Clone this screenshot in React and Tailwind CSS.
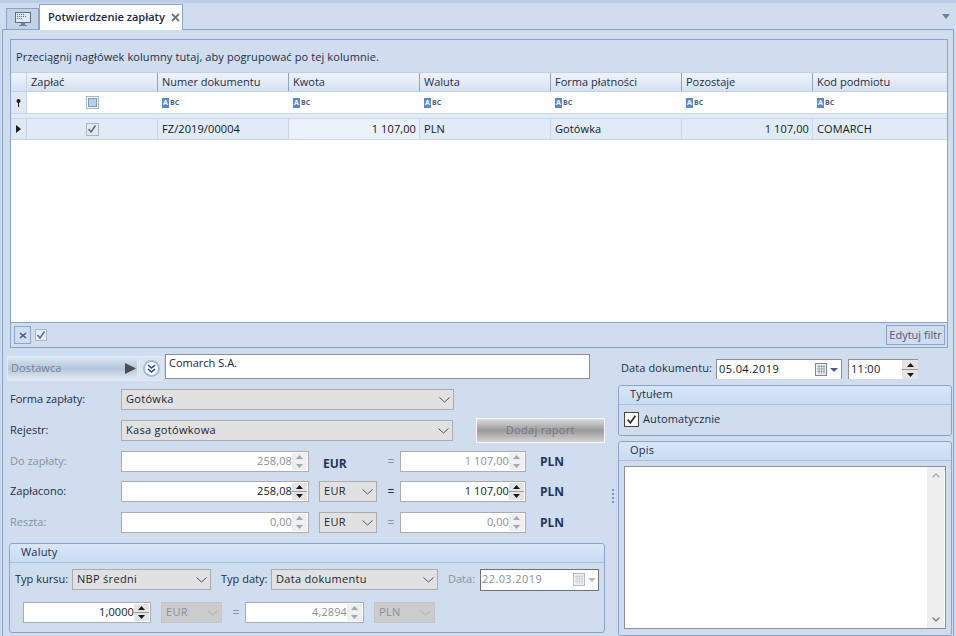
const font = { fontFamily: '"Open Sans", sans-serif' }

const KOLUMNY = [
  { nazwa: 'Numer dokumentu', w: 'w-[131px]' },
  { nazwa: 'Kwota', w: 'w-[131px]' },
  { nazwa: 'Waluta', w: 'w-[131px]' },
  { nazwa: 'Forma płatności', w: 'w-[131px]' },
  { nazwa: 'Pozostaje', w: 'w-[131px]' },
  { nazwa: 'Kod podmiotu', w: 'flex-1' },
]

function Abc() {
  return (
    <span className="flex items-center gap-[1px] ml-[4px]">
      <span className="w-[7px] h-[10px] bg-[#5b87cf] text-white text-[7px] leading-[10px] font-bold text-center">A</span>
      <span className="text-[#4a5f86] text-[7px] leading-[10px] font-bold">BC</span>
    </span>
  )
}

function Check({ color = '#5a6f90', size = 10 }) {
  return (
    <svg width={size} height={size} viewBox="0 0 10 10">
      <path d="M1.5 5 L4 8 L8.5 1.5" fill="none" stroke={color} strokeWidth="1.6" />
    </svg>
  )
}

function Spin({ disabled, w = 'w-[16px]' }) {
  const c = disabled ? '#a0a8b0' : '#1a1a1a'
  return (
    <div className={`${w} h-full flex flex-col shrink-0 gap-[1px] ${disabled ? 'bg-[#f6f6f6]' : 'bg-[#9a9a9a]'}`}>
      <div className={`flex-1 flex items-center justify-center ${disabled ? 'bg-[#eeeeee]' : 'bg-[#e4e4e4]'}`}>
        <svg width="7" height="4" viewBox="0 0 7 4"><path d="M3.5 0 L7 4 H0 Z" fill={c} /></svg>
      </div>
      <div className={`flex-1 flex items-center justify-center ${disabled ? 'bg-[#eeeeee]' : 'bg-[#e4e4e4]'}`}>
        <svg width="7" height="4" viewBox="0 0 7 4"><path d="M0 0 H7 L3.5 4 Z" fill={c} /></svg>
      </div>
    </div>
  )
}

function NumInput({ value, w, faded }) {
  return (
    <div className={`${w} h-[21px] flex border border-[#a9adb2] bg-white pr-[1px] py-[1px]`}>
      <span className={`flex-1 text-right text-[11px] tracking-[0.1px] leading-[15px] whitespace-nowrap ${faded ? 'text-[#8a8f98]' : 'text-[#101828]'}`}>{value}</span>
      <Spin disabled={faded} w="w-[15px]" />
    </div>
  )
}

function Chevron({ color = '#4a5568' }) {
  return (
    <svg width="11" height="6" viewBox="0 0 11 6" className="shrink-0">
      <path d="M0.5 0.5 L5.5 5 L10.5 0.5" fill="none" stroke={color} strokeWidth="1" />
    </svg>
  )
}

function Select({ value, w, disabled }) {
  return (
    <div className={`${w} h-[21px] flex items-center justify-between pl-[4px] pr-[3px] border text-[11px] tracking-[0.3px] whitespace-nowrap ${disabled ? 'bg-[#cccccc] border-[#c4c4c4] text-[#8a8f98]' : 'bg-[#e1e1e1] border-[#a9adb2] text-[#1b2436]'}`}>
      <span>{value}</span>
      <Chevron color={disabled ? '#aab0b8' : '#4a5568'} />
    </div>
  )
}

function CalendarIcon({ faded }) {
  return (
    <span className="flex items-center gap-[2px] shrink-0">
      <svg width="13" height="14" viewBox="0 0 13 14">
        <rect x="0.5" y="0.5" width="11" height="12" fill="#eef0f3" stroke={faded ? '#b8bcc2' : '#7d8592'} />
        <path d="M2 3.5H10M2 6H10M2 8.5H10M4 2V11M6.5 2V11M9 2V11" stroke={faded ? '#c6cad0' : '#8a929e'} strokeWidth="0.7" />
      </svg>
      <svg width="8" height="4" viewBox="0 0 8 4"><path d="M0 0H8L4 4Z" fill={faded ? '#b8bcc2' : '#4c5f80'} /></svg>
    </span>
  )
}

function GroupHeader({ children }) {
  return (
    <div className="h-[19px] shrink-0 flex items-center pl-[11px] pb-[2px] text-[11px] tracking-[0.2px] text-[#1f2d48] bg-gradient-to-b from-[#d9e6f7] to-[#c8dcf4] border-b border-[#a9bfdc] rounded-t-[3px]">
      {children}
    </div>
  )
}

function Label({ children, faded }) {
  return <span className={`w-[114px] shrink-0 pl-[3px] text-[11px] whitespace-nowrap ${faded ? 'text-[#8a929e]' : 'text-[#1f2d48]'}`}>{children}</span>
}

function Kwoty({ label, kwota, pln, wal, faded }) {
  return (
    <div className="flex items-center h-[21px]">
      <Label faded={faded}>{label}</Label>
      <NumInput value={kwota} w="w-[188px]" faded={faded} />
      <div className="w-[58px] ml-[10px] shrink-0">
        {wal ? <Select value="EUR" w="w-[58px]" /> : <span className="pl-[4px] text-[12px] font-bold text-[#1f3560]">EUR</span>}
      </div>
      <span className={`w-[23px] pl-[5px] text-center text-[12px] ${faded ? 'text-[#8a929e]' : 'text-[#1f2d48]'}`}>=</span>
      <NumInput value={pln} w="w-[126px]" faded={faded} />
      <span className="ml-[14px] text-[12px] font-bold text-[#1f3560]">PLN</span>
    </div>
  )
}

export default function App() {
  return (
    <div style={font} className="w-[956px] h-[636px] overflow-hidden bg-[#d0ddee] flex flex-col">
      {/* Zakladki */}
      <div className="h-[30px] shrink-0 flex items-end border-t-[3px] border-[#bccde3] pl-[6px] pr-[6px] relative z-10">
        <div className="w-[33px] h-[21px] mb-[1px] border border-[#8aa3c8] border-b-0 bg-[#c3d2e7] flex items-center justify-center">
          <svg width="16" height="15" viewBox="0 0 16 15">
            <rect x="0.5" y="0.5" width="15" height="10" fill="#dfe9f6" stroke="#5a6d8c" />
            <path d="M2 2.5H9M2 4.5H11M2 6.5H8" stroke="#5a6d8c" strokeDasharray="1 1" />
            <path d="M6 11H10V13H12V14H4V13H6Z" fill="#6d7f9c" />
          </svg>
        </div>
        <div className="w-[144px] h-[26px] border border-[#8aa3c8] border-b-0 bg-white flex items-center pl-[8px] gap-[6px] whitespace-nowrap">
          <span className="text-[11px] font-semibold text-[#1c2a4a]">Potwierdzenie zapłaty</span>
          <svg width="9" height="9" viewBox="0 0 9 9"><path d="M1 1L8 8M8 1L1 8" stroke="#6d7686" strokeWidth="1.8" /></svg>
        </div>
        <div className="flex-1" />
        <svg width="8" height="5" viewBox="0 0 8 5" className="mb-[11px]"><path d="M0 0H8L4 5Z" fill="#6a7f9f" /></svg>
      </div>

      {/* Zawartosc */}
      <div className="flex-1 min-h-0 ml-[2px] mr-[2px] border-l border-t border-r border-[#8aa3c8] pl-[7px] pr-[5px] pt-[9px] flex flex-col -mt-[1px]">
        {/* Siatka */}
        <div className="h-[309px] shrink-0 border border-[#8aa3c8] flex flex-col bg-white text-[#1f2d48]">
          <div className="h-[32px] shrink-0 bg-[#d0ddee] flex items-center pl-[5px] text-[11px] tracking-[0.1px] pt-[3px]">
            Przeciągnij nagłówek kolumny tutaj, aby pogrupować po tej kolumnie.
          </div>
          <div className="h-[20px] shrink-0 flex bg-gradient-to-b from-[#eef3fa] to-[#d5e2f3] border-y border-[#c1d1e6] text-[11px] leading-[18px] whitespace-nowrap">
            <div className="w-[16px] shrink-0 border-r border-[#c4d3e8]" />
            <div className="w-[131px] shrink-0 border-r border-[#8aa3c8] pl-[4px]">Zapłać</div>
            {KOLUMNY.map(k => (
              <div key={k.nazwa} className={`${k.w} shrink-0 border-r last:border-r-0 border-[#8aa3c8] pl-[4px]`}>{k.nazwa}</div>
            ))}
          </div>
          <div className="h-[21px] shrink-0 flex">
            <div className="w-[16px] shrink-0 flex items-center justify-center border-r border-[#c4d3e8] bg-[#dfe8f4]">
              <svg width="5" height="8" viewBox="0 0 5 8"><circle cx="2.5" cy="2" r="2" fill="#1a1a1a" /><path d="M2 3H3V8H2Z" fill="#1a1a1a" /></svg>
            </div>
            <div className="w-[131px] shrink-0 flex items-center justify-center">
              <span className="w-[13px] h-[13px] border border-[#a4b7d2] p-[1px]"><span className="block w-full h-full bg-[#bcd0ea] border border-[#7f9ac2]" /></span>
            </div>
            {KOLUMNY.map(k => (
              <div key={k.nazwa} className={`${k.w} shrink-0 flex items-center`}><Abc /></div>
            ))}
          </div>
          <div className="h-[6px] shrink-0 bg-[#e2ecf7] border-y border-[#c7d7ec]" />
          <div className="h-[21px] shrink-0 flex bg-[#e1ebf6] border-b border-[#c7d7ec] text-[11px] tracking-[0.1px] leading-[20px] text-[#111827] whitespace-nowrap">
            <div className="w-[16px] shrink-0 flex items-center justify-center bg-[#dfe8f4] border-r border-[#c4d3e8]">
              <svg width="5" height="8" viewBox="0 0 5 8"><path d="M0 0L5 4L0 8Z" fill="#1a1a1a" /></svg>
            </div>
            <div className="w-[131px] shrink-0 flex items-center justify-center border-r border-[#c7d7ec]">
              <span className="w-[13px] h-[13px] border border-[#a4b7d2] bg-[#e8e8e8] flex items-center justify-center"><Check /></span>
            </div>
            <div className="w-[131px] shrink-0 border-r border-[#c7d7ec] pl-[4px]">FZ/2019/00004</div>
            <div className="w-[131px] shrink-0 border-r border-[#c7d7ec] text-right pr-[3px] bg-[#eaf1f9]">1 107,00</div>
            <div className="w-[131px] shrink-0 border-r border-[#c7d7ec] pl-[4px]">PLN</div>
            <div className="w-[131px] shrink-0 border-r border-[#c7d7ec] pl-[4px]">Gotówka</div>
            <div className="w-[131px] shrink-0 border-r border-[#c7d7ec] text-right pr-[3px]">1 107,00</div>
            <div className="flex-1 pl-[4px]">COMARCH</div>
          </div>
          <div className="flex-1" />
          <div className="h-[25px] shrink-0 bg-[#d0ddee] border-t border-[#8aa3c8] flex items-center pl-[3px] pr-[2px]">
            <div className="w-[17px] h-[18px] border border-[#8aa3c8] flex items-center justify-center">
              <svg width="8" height="7" viewBox="0 0 8 7"><path d="M1 1L7 6M7 1L1 6" stroke="#4a5a78" strokeWidth="1.6" /></svg>
            </div>
            <span className="ml-[4px] w-[12px] h-[12px] border border-[#a4b7d2] bg-[#e8edf4] flex items-center justify-center"><Check /></span>
            <div className="flex-1" />
            <div className="w-[59px] h-[20px] border border-[#8aa3c8] flex items-center justify-center text-[11px] text-[#4a5a78] whitespace-nowrap">Edytuj filtr</div>
          </div>
        </div>

        {/* Formularz */}
        <div className="flex-1 min-h-0 flex -ml-[3px] -mr-[4px]">
          <div className="w-[598px] shrink-0 flex flex-col">
            <div className="flex mt-[6px] h-[27px]">
              <div className="w-[131px] h-[25px] mt-[2px] flex items-center justify-between pl-[3px] pr-[1px] text-[11px] font-medium tracking-[0.1px] text-[#7a8290] border border-[#e3eaf3] bg-gradient-to-b from-[#dce6f2] via-[#b4c6da] to-[#e3ebf4]">
                <span className="pb-[1px]">Dostawca</span>
                <svg width="11" height="11" viewBox="0 0 11 11"><path d="M0 0L11 5.5L0 11Z" fill="#4d4d4d" /></svg>
              </div>
              <div className="w-[24px] h-[25px] mt-[2px] ml-[1px] flex items-center justify-center border border-[#e3eaf3] bg-[#d9e4f1]">
                <span className="w-[17px] h-[17px] rounded-full border-2 border-[#a9b8e0] bg-white flex items-center justify-center">
                  <svg width="9" height="9" viewBox="0 0 9 9"><path d="M1 1L4.5 4L8 1M1 5L4.5 8L8 5" fill="none" stroke="#1c3f94" strokeWidth="1.4" /></svg>
                </span>
              </div>
              <div className="w-[425px] h-[25px] ml-[2px] bg-white border border-[#8c8f94] pl-[3px] text-[11px] leading-[16px] text-[#1b2436]">Comarch S.A.</div>
            </div>

            <div className="flex items-center h-[21px] mt-[8px]">
              <Label>Forma zapłaty:</Label>
              <Select value="Gotówka" w="w-[333px]" />
            </div>
            <div className="flex items-center h-[21px] mt-[10px]">
              <Label>Rejestr:</Label>
              <Select value="Kasa gotówkowa" w="w-[333px]" />
              <div className="w-[130px] h-[25px] ml-[23px] flex items-center justify-center text-[11px] tracking-[0.3px] text-[#737a85] border border-[#f4f7fb] bg-gradient-to-b from-[#dcdcdc] via-[#9a9a9a] to-[#d4d4d4]">Dodaj raport</div>
            </div>
            <div className="mt-[10px]"><Kwoty label="Do zapłaty:" kwota="258,08" pln="1 107,00" faded /></div>
            <div className="mt-[9px]"><Kwoty label="Zapłacono:" kwota="258,08" pln="1 107,00" wal /></div>
            <div className="mt-[10px]"><Kwoty label="Reszta:" kwota="0,00" pln="0,00" faded wal /></div>

            <div className="mt-[10px] ml-[2px] w-[596px] h-[90px] border border-[#8aa3c8] rounded-[3px] flex flex-col">
              <GroupHeader>Waluty</GroupHeader>
              <div className="flex items-center h-[21px] mt-[6px] pl-[5px] text-[11px] text-[#1f2d48] whitespace-nowrap">
                <span className="w-[57px] shrink-0">Typ kursu:</span>
                <Select value="NBP średni" w="w-[139px]" />
                <span className="ml-[10px] w-[50px] shrink-0">Typ daty:</span>
                <Select value="Data dokumentu" w="w-[167px]" />
                <span className="ml-[10px] w-[32px] shrink-0 text-[#8a929e]">Data:</span>
                <div className="w-[119px] h-[22px] flex items-center justify-between pl-[1px] pr-[2px] bg-white border border-[#6f7379] text-[#8a8f98] tracking-[0.4px]">
                  <span>22.03.2019</span>
                  <CalendarIcon faded />
                </div>
              </div>
              <div className="flex items-center h-[21px] mt-[12px] pl-[13px]">
                <NumInput value="1,0000" w="w-[128px]" />
                <div className="ml-[10px]"><Select value="EUR" w="w-[61px]" disabled /></div>
                <span className="w-[23px] pl-[5px] text-center text-[12px] text-[#8a929e]">=</span>
                <NumInput value="4,2894" w="w-[119px]" faded />
                <div className="ml-[10px]"><Select value="PLN" w="w-[61px]" disabled /></div>
              </div>
            </div>
          </div>

          {/* Spliter */}
          <div className="w-[13px] shrink-0 flex flex-col items-center gap-[2px] pt-[141px] pl-[3px]">
            <span className="w-[2px] h-[2px] bg-[#7d93b5]" />
            <span className="w-[2px] h-[2px] bg-[#7d93b5]" />
            <span className="w-[2px] h-[2px] bg-[#7d93b5]" />
            <span className="w-[2px] h-[2px] bg-[#7d93b5]" />
          </div>

          <div className="w-[334px] shrink-0 flex flex-col">
            <div className="flex items-center h-[20px] mt-[11px] pl-[3px] text-[11px] text-[#1f2d48] whitespace-nowrap">
              <span className="w-[95px] shrink-0 tracking-[0.1px] pb-[1px]">Data dokumentu:</span>
              <div className="w-[126px] h-[20px] flex items-center justify-between pl-[2px] pr-[3px] bg-white border border-[#8c8f94] border-b-0 text-[#101828] tracking-[0.4px]">
                <span>05.04.2019</span>
                <CalendarIcon />
              </div>
              <div className="w-[70px] h-[20px] ml-[6px] flex bg-white border border-[#8c8f94] border-b-0 border-r-0 pl-[2px] text-[#101828]">
                <span className="flex-1 leading-[18px] tracking-[0.3px]">11:00</span>
                <Spin />
              </div>
            </div>
            <div className="mt-[6px] h-[51px] border border-[#8aa3c8] rounded-[3px] flex flex-col">
              <GroupHeader>Tytułem</GroupHeader>
              <div className="flex items-center gap-[4px] pl-[5px] mt-[6px] text-[11px] tracking-[0.1px] text-[#1f2d48]">
                <span className="w-[15px] h-[15px] border border-[#444] bg-white flex items-center justify-center"><Check color="#333" size={11} /></span>
                Automatycznie
              </div>
            </div>
            <div className="mt-[5px] h-[195px] border border-[#8aa3c8] rounded-[3px] flex flex-col">
              <GroupHeader>Opis</GroupHeader>
              <div className="mt-[5px] mx-[5px] h-[163px] border border-[#8c8f94] bg-white flex justify-end">
                <div className="w-[17px] mr-[1px] bg-[#eeeeee] flex flex-col justify-between items-center py-[6px]">
                  <svg width="8" height="5" viewBox="0 0 8 5"><path d="M0.5 4.5L4 1L7.5 4.5" fill="none" stroke="#b0b0b0" strokeWidth="1.4" /></svg>
                  <svg width="8" height="5" viewBox="0 0 8 5"><path d="M0.5 0.5L4 4L7.5 0.5" fill="none" stroke="#808080" strokeWidth="1.4" /></svg>
                </div>
              </div>
            </div>
          </div>
        </div>
      </div>
    </div>
  )
}
